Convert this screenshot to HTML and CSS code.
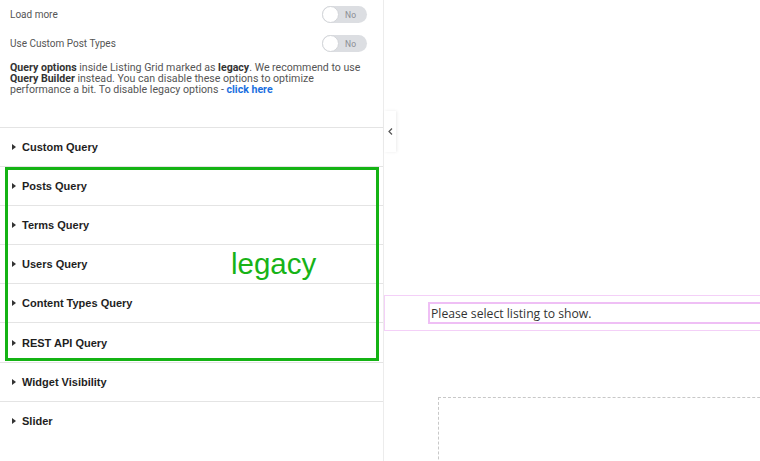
FILE: index.html
```html
<!DOCTYPE html>
<html lang="en">
<head>
<meta charset="utf-8">
<title>Listing Grid</title>
<link rel="stylesheet" href="styles.css">
</head>
<body>
<div class="app">
  <aside class="panel">
    <div class="controls">
      <div class="control">
        <span class="label">Load more</span>
        <span class="switch"><span class="knob"></span><span class="sw-text">No</span></span>
      </div>
      <div class="control">
        <span class="label">Use Custom Post Types</span>
        <span class="switch"><span class="knob"></span><span class="sw-text">No</span></span>
      </div>
      <p class="note"><b>Query options</b> inside Listing Grid marked as <b>legacy</b>. We recommend to use <b>Query Builder</b> instead. You can disable these options to optimize performance a bit. To disable legacy options - <a class="link" href="#">click here</a></p>
    </div>
    <div class="sections">
      <div class="section"><span class="caret"></span>Custom Query</div>
      <div class="section"><span class="caret"></span>Posts Query</div>
      <div class="section"><span class="caret"></span>Terms Query</div>
      <div class="section"><span class="caret"></span>Users Query</div>
      <div class="section"><span class="caret"></span>Content Types Query</div>
      <div class="section"><span class="caret"></span>REST API Query</div>
      <div class="section"><span class="caret"></span>Widget Visibility</div>
      <div class="section"><span class="caret"></span>Slider</div>
    </div>
    <div class="legacy-box"><span class="legacy-label">legacy</span></div>
    <div class="collapse-tab">
      <svg width="5" height="7" viewBox="0 0 5 7"><path d="M4 0.5 L1 3.5 L4 6.5" fill="none" stroke="#555" stroke-width="1.2"/></svg>
    </div>
  </aside>
  <main class="preview">
    <div class="listing-outer">
      <div class="listing-inner">Please select listing to show.</div>
    </div>
    <div class="dropzone"></div>
  </main>
</div>
</body>
</html>
```

FILE: styles.css
```css
html, body {
  margin: 0;
  padding: 0;
  background: #fff;
}
.app {
  display: flex;
  width: 760px;
  height: 461px;
  overflow: hidden;
}
.panel {
  position: relative;
  flex: 0 0 383px;
  border-right: 1px solid #ececec;
  background: #fff;
  font-family: Roboto, "Liberation Sans", sans-serif;
}
.controls {
  height: 127px;
  padding: 0 10px;
  box-sizing: border-box;
}
.control {
  height: 29px;
  padding-right: 6px;
  display: flex;
  align-items: center;
  justify-content: space-between;
}
.label {
  font-size: 10px;
  color: #555;
}
.switch {
  position: relative;
  width: 45px;
  height: 17px;
  border-radius: 9px;
  background: #dcdee2;
  display: flex;
  align-items: center;
  justify-content: flex-end;
  box-sizing: border-box;
  padding-right: 11px;
}
.knob {
  position: absolute;
  left: 0;
  top: 0;
  width: 17px;
  height: 17px;
  border-radius: 50%;
  background: #fff;
  box-sizing: border-box;
  border: 1px solid #d3d5d9;
}
.sw-text {
  font-size: 8.5px;
  color: #8a8d92;
}
.note {
  margin: 5px 0 0;
  font-size: 10.6px;
  line-height: 10.8px;
  color: #555;
}
.note b {
  color: #333;
  font-weight: 700;
}
.link {
  color: #1b6fe0;
  font-weight: 700;
  text-decoration: none;
}
.sections {
  display: flex;
  flex-direction: column;
}
.section {
  height: 38.1px;
  border-top: 1px solid #e4e4e4;
  display: flex;
  align-items: center;
  padding-left: 12px;
  font-family: "Liberation Sans", Arial, sans-serif;
  font-size: 11px;
  font-weight: 700;
  color: #1e1e1e;
}
.caret {
  width: 0;
  height: 0;
  border-top: 3px solid transparent;
  border-bottom: 3px solid transparent;
  border-left: 4px solid #333;
  margin-right: 6px;
}
.legacy-box {
  position: absolute;
  left: 5px;
  top: 167px;
  width: 374px;
  height: 194px;
  box-sizing: border-box;
  border: 3px solid #14b314;
}
.legacy-label {
  position: absolute;
  left: 223px;
  top: 79px;
  font-family: "Liberation Sans", Arial, sans-serif;
  font-size: 29.5px;
  line-height: 1;
  color: #17b317;
}
.collapse-tab {
  position: absolute;
  left: 384px;
  top: 111px;
  width: 12px;
  height: 41px;
  background: #fff;
  box-shadow: 1px 0 3px rgba(0, 0, 0, 0.08);
  display: flex;
  align-items: center;
  justify-content: center;
  z-index: 2;
}
.preview {
  flex: 1 1 auto;
  padding-top: 295px;
  min-width: 0;
}
.listing-outer {
  width: 420px;
  height: 36px;
  box-sizing: border-box;
  border: 1px solid #f4d0f8;
  padding: 6px 0 0 43px;
}
.listing-inner {
  height: 22px;
  box-sizing: border-box;
  border: 2px solid #efbff5;
  padding-left: 1px;
  display: flex;
  align-items: center;
  font-family: "Open Sans", "Noto Sans", sans-serif;
  font-size: 12.2px;
  color: #333;
}
.dropzone {
  margin: 66px 0 0 54px;
  width: 400px;
  height: 100px;
  border: 1px dashed #c8c8c8;
}
```
